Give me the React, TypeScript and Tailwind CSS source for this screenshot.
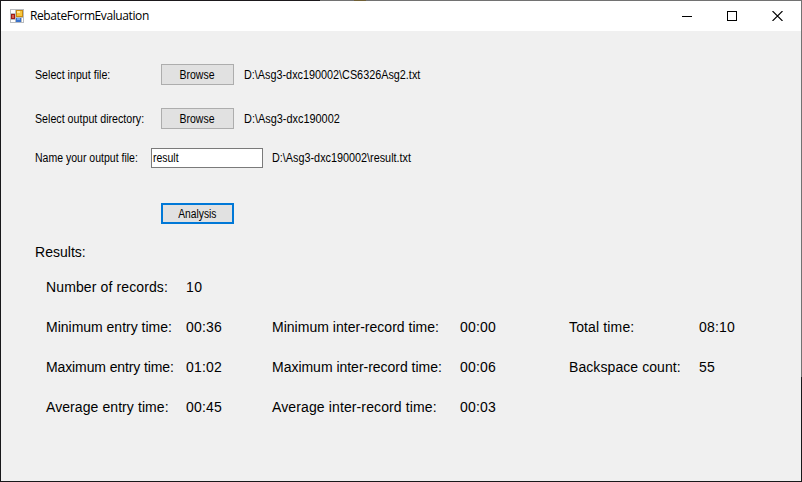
import type { ReactNode } from "react";

function Text({ className = "", children }: { className?: string; children: ReactNode }) {
  return <span className={`shrink-0 whitespace-pre ${className}`}>{children}</span>;
}

function Button({ label, focused = false, textClass }: { label: string; focused?: boolean; textClass: string }) {
  return (
    <button
      className={`flex h-[21px] w-[73px] shrink-0 items-center justify-center bg-[#e1e1e1] pr-px text-[12px] leading-[18px] ${
        focused ? "border-2 border-[#0078d7]" : "border border-[#adadad]"
      }`}
    >
      <span className={`mt-px ${textClass}`}>{label}</span>
    </button>
  );
}

function AppIcon() {
  return (
    <svg width="14" height="14" viewBox="0 0 14 14" shapeRendering="crispEdges" className="shrink-0">
      <rect width="14" height="14" fill="#b9bcc0" />
      <rect x="1" y="1" width="4" height="3" fill="#fff" />
      <rect x="1" y="11" width="4" height="2" fill="#fff" />
      <rect x="12" y="9" width="1" height="4" fill="#fff" />
      <rect x="1" y="5" width="4" height="5" fill="#a01a18" />
      <rect x="2" y="6" width="2" height="3" fill="#d8604c" />
      <rect x="6" y="1" width="7" height="7" fill="#c98a10" />
      <rect x="7" y="2" width="5" height="5" fill="#f8c63c" />
      <rect x="7" y="2" width="3" height="2" fill="#ffe796" />
      <rect x="6" y="9" width="5" height="4" fill="#3a72cc" />
      <rect x="7" y="9" width="3" height="2" fill="#78a8ec" />
    </svg>
  );
}

function TitleBar() {
  return (
    <header className="flex h-[30px] shrink-0 items-center bg-white pl-[9px] pr-[18px]">
      <AppIcon />
      <Text className="ml-[6px] grow font-['Open_Sans','Noto_Sans',sans-serif] text-[12px] leading-[20px] tracking-[-0.4px]">
        RebateFormEvaluation
      </Text>
      <div className="flex items-center gap-[35px] pb-px">
        <svg width="10" height="10" viewBox="0 0 10 10" shapeRendering="crispEdges">
          <rect y="5" width="10" height="1" />
        </svg>
        <svg width="10" height="10" viewBox="0 0 10 10" shapeRendering="crispEdges">
          <rect x="0.5" y="0.5" width="9" height="9" fill="none" stroke="#000" />
        </svg>
        <svg width="11" height="10" viewBox="0 0 11 10">
          <path d="M0.5 0L10.5 10M10.5 0L0.5 10" stroke="#000" strokeWidth="1.1" />
        </svg>
      </div>
    </header>
  );
}

const results = [
  {
    entry: ["Minimum entry time:", "00:36", "tracking-[-0.01px]"],
    inter: ["Minimum inter-record time:", "00:00", "tracking-[0.02px]"],
    other: ["Total time:", "08:10", "tracking-[0.14px]"],
  },
  {
    entry: ["Maximum entry time:", "01:02", "tracking-[-0.11px]"],
    inter: ["Maximum inter-record time:", "00:06", "tracking-[-0.02px]"],
    other: ["Backspace count:", "55", "tracking-[0.08px]"],
  },
  {
    entry: ["Average entry time:", "00:45", "tracking-[0.08px]"],
    inter: ["Average inter-record time:", "00:03", "tracking-[0.12px]"],
    other: null,
  },
];

export default function App() {
  return (
    <div className="flex h-[482px] w-[802px] flex-col overflow-hidden bg-[#f0f0f0] font-['Liberation_Sans',Arial,sans-serif] text-black">
      <div className="flex h-px shrink-0">
        <div className="w-[320px] bg-[#1b181b]" />
        <div className="w-[34px] bg-[#727272]" />
        <div className="w-[12px] bg-[#706036]" />
        <div className="grow bg-[#727272]" />
      </div>
      <div className="flex h-[480px] shrink-0">
        <div className="w-px bg-[#18181a]" />
        <div className="flex w-[800px] flex-col">
          <TitleBar />
          <main className="flex flex-col pl-[34px] pt-[33px]">
            <div className="flex h-[21px] text-[12px] leading-[22px]">
              <Text className="w-[126px] origin-left scale-x-[0.889]">Select input file:</Text>
              <Button label="Browse" textClass="scale-x-[0.875]" />
              <Text className="ml-[10px] origin-left scale-x-[0.902]">D:\Asg3-dxc190002\CS6326Asg2.txt</Text>
            </div>
            <div className="mt-[23px] flex h-[21px] text-[12px] leading-[22px]">
              <Text className="w-[126px] origin-left scale-x-[0.889]">Select output directory:</Text>
              <Button label="Browse" textClass="scale-x-[0.875]" />
              <Text className="ml-[10px] origin-left scale-x-[0.909]">D:\Asg3-dxc190002</Text>
            </div>
            <div className="mt-[19px] flex h-[20px] text-[12px] leading-[20px]">
              <Text className="w-[116px] origin-left scale-x-[0.876]">Name your output file:</Text>
              <div className="flex h-[20px] w-[112px] shrink-0 overflow-hidden border border-[#7a7a7a] bg-white pl-px">
                <input
                  defaultValue="result"
                  className="h-[18px] w-[122px] shrink-0 origin-left scale-x-[0.87] bg-white leading-[18px] outline-none"
                />
              </div>
              <Text className="ml-[9px] origin-left scale-x-[0.902]">D:\Asg3-dxc190002\result.txt</Text>
            </div>
            <div className="mt-[35px] flex pl-[126px]">
              <Button label="Analysis" focused textClass="scale-x-[0.855]" />
            </div>
            <section className="mt-[18px] text-[14px] leading-[20px]">
              <h2 className="tracking-[0.02px]">Results:</h2>
              <div className="mt-[15px] flex pl-[11px]">
                <Text className="w-[140px] tracking-[0.12px]">Number of records:</Text>
                <Text className="tracking-[0.4px]">10</Text>
              </div>
              <div className="mt-5 flex flex-col gap-5 pl-[11px]">
                {results.map(({ entry, inter, other }) => (
                  <div key={entry[0]} className="flex">
                    <Text className={`w-[140px] ${entry[2]}`}>{entry[0]}</Text>
                    <Text className="w-[86px] tracking-[0.2px]">{entry[1]}</Text>
                    <Text className={`w-[188px] ${inter[2]}`}>{inter[0]}</Text>
                    <Text className="w-[109px] tracking-[0.2px]">{inter[1]}</Text>
                    {other && (
                      <>
                        <Text className={`w-[130px] ${other[2]}`}>{other[0]}</Text>
                        <Text className="tracking-[0.2px]">{other[1]}</Text>
                      </>
                    )}
                  </div>
                ))}
              </div>
            </section>
          </main>
        </div>
        <div className="flex w-px flex-col">
          <div className="h-[376px] bg-[#727272]" />
          <div className="grow bg-[#18181a]" />
        </div>
      </div>
      <div className="h-px shrink-0 bg-[#18181a]" />
    </div>
  );
}
